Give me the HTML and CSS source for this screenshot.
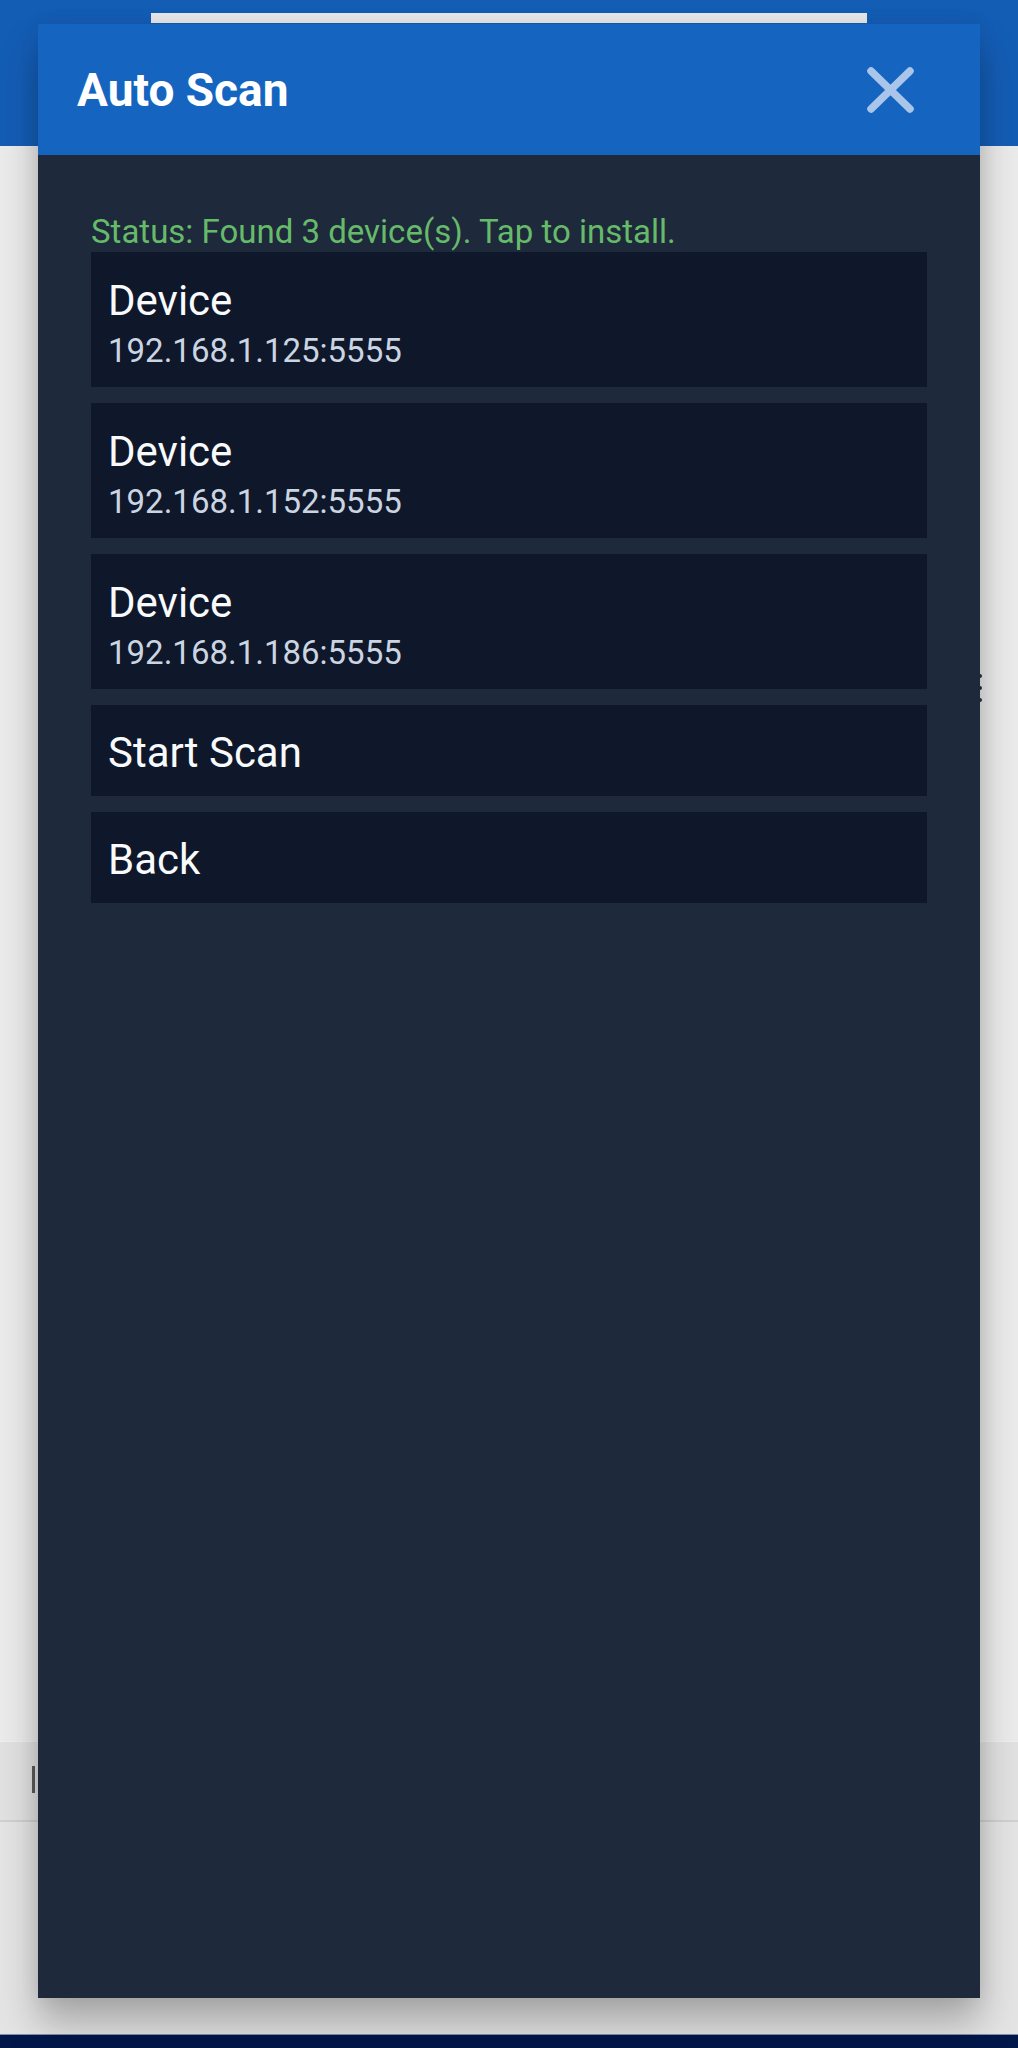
FILE: index.html
```html
<!DOCTYPE html>
<html lang="en">
<head>
<meta charset="utf-8">
<title>Auto Scan</title>
<link rel="stylesheet" href="styles.css">
</head>
<body>
<div class="page">
  <header class="appbar">
    <div class="handle"></div>
  </header>
  <main class="content">
    <div class="spacer"></div>
    <div class="inputband"><span class="cursor"></span></div>
    <div class="rest"></div>
  </main>
  <div class="navbar"></div>
  <span class="kebab"><i></i><i></i><i></i></span>
</div>

<div class="dialog">
  <div class="dialog-head">
    <h1 class="dialog-title">Auto Scan</h1>
    <svg class="close" viewBox="0 0 47 46" width="47" height="46" aria-label="Close">
      <path d="M4 4 L43 42 M43 4 L4 42" stroke="#a9c5ea" stroke-width="7.5" stroke-linecap="round" fill="none"/>
    </svg>
  </div>
  <div class="dialog-body">
    <p class="status">Status: Found 3 device(s). Tap to install.</p>
    <div class="list">
      <div class="item device">
        <div class="name">Device</div>
        <div class="addr">192.168.1.125:5555</div>
      </div>
      <div class="item device">
        <div class="name">Device</div>
        <div class="addr">192.168.1.152:5555</div>
      </div>
      <div class="item device">
        <div class="name">Device</div>
        <div class="addr">192.168.1.186:5555</div>
      </div>
      <div class="item action">Start Scan</div>
      <div class="item action">Back</div>
    </div>
  </div>
</div>
</body>
</html>
```

FILE: styles.css
```css
html, body {
  margin: 0;
  padding: 0;
}
body {
  width: 1018px;
  height: 2048px;
  overflow: hidden;
  position: relative;
  font-family: Roboto, "Noto Sans", "Liberation Sans", sans-serif;
  background: #e9e9e9;
}

.page {
  height: 2048px;
  display: flex;
  flex-direction: column;
  position: relative;
}
.appbar {
  height: 146px;
  background: #145db5;
  display: flex;
  justify-content: center;
  padding-top: 13px;
  box-sizing: border-box;
}
.handle {
  width: 716px;
  height: 10px;
  background: #e8e8ea;
}
.content {
  flex: 1;
  display: flex;
  flex-direction: column;
  background: #ebebeb;
}
.spacer {
  height: 1595px;
}
.inputband {
  height: 81px;
  background: #e1e1e1;
  border-top: 1px solid #efefef;
  border-bottom: 2px solid #d0d0d0;
  position: relative;
  padding: 24px 0 0 32px;
  box-sizing: border-box;
}
.cursor {
  display: block;
  width: 3px;
  height: 27px;
  background: #5a5a5a;
}
.rest {
  flex: 1;
  background: #e4e4e4;
}
.navbar {
  height: 13px;
  background: #00174a;
  border-top: 1px solid #7f90ab;
}
.kebab {
  position: absolute;
  left: 978px;
  top: 674px;
  display: flex;
  flex-direction: column;
  gap: 8px;
}
.kebab i {
  display: block;
  width: 4px;
  height: 4px;
  border-radius: 50%;
  background: #2a2f3a;
}

.dialog {
  position: absolute;
  left: 38px;
  top: 24px;
  width: 942px;
  height: 1974px;
  display: flex;
  flex-direction: column;
  background: #1e293b;
  box-shadow: 0 26px 36px rgba(0, 0, 0, 0.26), 0 0 18px rgba(0, 0, 0, 0.08);
}
.dialog-head {
  height: 131px;
  flex: none;
  background: #1565c0;
  display: flex;
  align-items: center;
  justify-content: space-between;
  padding: 0 66px 0 39px;
  box-sizing: border-box;
}
.dialog-title {
  margin: 0;
  color: #ffffff;
  font-size: 46px;
  font-weight: 700;
  line-height: 54px;
}
.close {
  display: block;
}
.dialog-body {
  flex: 1;
  padding: 58px 53px 0 53px;
}
.status {
  margin: 0 0 1px 0;
  color: #66bb6a;
  font-size: 33px;
  line-height: 38px;
}
.list {
  display: flex;
  flex-direction: column;
  gap: 16px;
}
.item {
  background: #0f172a;
  padding-left: 17px;
  color: #ffffff;
}
.device {
  height: 135px;
  box-sizing: border-box;
  padding-top: 24px;
}
.name {
  font-size: 42px;
  line-height: 50px;
  color: #f8fafc;
}
.addr {
  margin-top: 5px;
  font-size: 33px;
  line-height: 40px;
  color: #cbd5e1;
}
.action {
  height: 91px;
  box-sizing: border-box;
  padding-top: 23px;
  font-size: 42px;
  line-height: 50px;
  color: #f8fafc;
}
```
